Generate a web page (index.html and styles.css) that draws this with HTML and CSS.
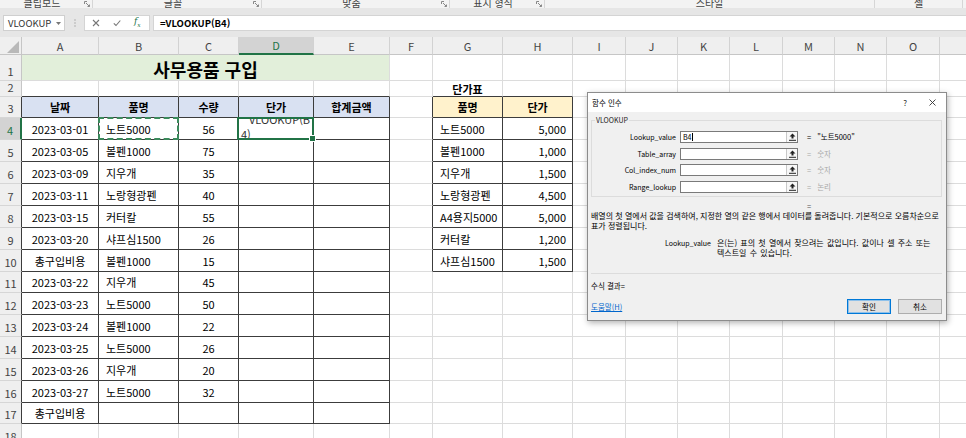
FILE: index.html
```html
<!DOCTYPE html>
<html lang="ko">
<head>
    <meta charset="UTF-8">
    <meta name="viewport" content="width=device-width, initial-scale=1.0">
    <title>사무용품 구입 - VLOOKUP</title>
    <link rel="stylesheet" href="styles.css">
</head>
<body>
    <!-- Ribbon group labels (only the bottom edge is visible) -->
    <div class="ribbon">
        <div class="group g1"><span>클립보드</span><svg class="launch" width="6" height="6"><path d="M.5 3V.5H3M2 2l3.5 3.5M3.5 5.5h2v-2" stroke="#888" fill="none"/></svg></div>
        <div class="group g2"><span>글꼴</span><svg class="launch" width="6" height="6"><path d="M.5 3V.5H3M2 2l3.5 3.5M3.5 5.5h2v-2" stroke="#888" fill="none"/></svg></div>
        <div class="group g3"><span>맞춤</span><svg class="launch" width="6" height="6"><path d="M.5 3V.5H3M2 2l3.5 3.5M3.5 5.5h2v-2" stroke="#888" fill="none"/></svg></div>
        <div class="group g4"><span>표시 형식</span><svg class="launch" width="6" height="6"><path d="M.5 3V.5H3M2 2l3.5 3.5M3.5 5.5h2v-2" stroke="#888" fill="none"/></svg></div>
        <div class="group g5"><span>스타일</span></div>
        <div class="group g6"><span>셀</span></div>
    </div>

    <!-- Name box + formula bar -->
    <div class="fbar">
        <div class="namebox">
            <span>VLOOKUP</span>
            <svg width="5" height="3"><polygon points="0,0 5,0 2.5,3" fill="#777"/></svg>
        </div>
        <div class="grip">
            <svg width="2" height="8"><circle cx="1" cy="1" r=".8" fill="#aaa"/><circle cx="1" cy="4" r=".8" fill="#aaa"/><circle cx="1" cy="7" r=".8" fill="#aaa"/></svg>
        </div>
        <div class="fbtns">
            <svg width="8" height="8"><path d="M1 1l6 6M7 1l-6 6" stroke="#777" stroke-width="1.1"/></svg>
            <svg width="8" height="8"><path d="M.8 4.3l2.2 2.2L7.3 1.5" stroke="#777" stroke-width="1.1" fill="none"/></svg>
            <span class="fx">f<sub>x</sub></span>
        </div>
        <div class="finput">=VLOOKUP(B4)</div>
    </div>

    <!-- Worksheet -->
    <div class="sheet">
        <div class="corner"><svg width="21" height="17"><polygon points="7,16 19,16 19,4" fill="#b9b9b9"/></svg></div>
        <div class="ch">A</div><div class="ch">B</div><div class="ch">C</div><div class="ch sel">D</div><div class="ch">E</div><div class="ch">F</div><div class="ch">G</div><div class="ch">H</div><div class="ch">I</div><div class="ch">J</div><div class="ch">K</div><div class="ch">L</div><div class="ch">M</div><div class="ch">N</div><div class="ch">O</div><div class="ch">P</div>

        <div class="rh">1</div>
        <div class="c title">사무용품 구입</div>
        <div class="c"></div><div class="c"></div><div class="c"></div><div class="c"></div><div class="c"></div><div class="c"></div><div class="c"></div><div class="c"></div><div class="c"></div><div class="c"></div><div class="c"></div>

        <div class="rh">2</div>
        <div class="c tb"></div><div class="c tb"></div><div class="c tb"></div><div class="c tb"></div><div class="c tb"></div>
        <div class="c"></div><div class="c tb bold ctr">단가표</div><div class="c tb"></div>
        <div class="c"></div><div class="c"></div><div class="c"></div><div class="c"></div><div class="c"></div><div class="c"></div><div class="c"></div><div class="c"></div>

        <div class="rh tl">3</div>
        <div class="c t hd">날짜</div><div class="c t hd">품명</div><div class="c t hd">수량</div><div class="c t hd">단가</div><div class="c t hd">합계금액</div>
        <div class="c tl"></div><div class="c t hd2">품명</div><div class="c t hd2">단가</div>
        <div class="c"></div><div class="c"></div><div class="c"></div><div class="c"></div><div class="c"></div><div class="c"></div><div class="c"></div><div class="c"></div>

        <div class="rh tl sel">4</div>
        <div class="c t ctr">2023-03-01</div><div class="c t lft ants">노트5000</div><div class="c t ctr">56</div>
        <div class="c t cur"><div class="edit"><p><span class="l1">VLOOKUP(B</span><br>4)</p></div></div><div class="c t"></div>
        <div class="c tl"></div><div class="c t lft">노트5000</div><div class="c t rgt">5,000</div>
        <div class="c"></div><div class="c"></div><div class="c"></div><div class="c"></div><div class="c"></div><div class="c"></div><div class="c"></div><div class="c"></div>

        <div class="rh tl">5</div>
        <div class="c t ctr">2023-03-05</div><div class="c t lft">볼펜1000</div><div class="c t ctr">75</div><div class="c t"></div><div class="c t"></div>
        <div class="c tl"></div><div class="c t lft">볼펜1000</div><div class="c t rgt">1,000</div>
        <div class="c"></div><div class="c"></div><div class="c"></div><div class="c"></div><div class="c"></div><div class="c"></div><div class="c"></div><div class="c"></div>

        <div class="rh tl">6</div>
        <div class="c t ctr">2023-03-09</div><div class="c t lft">지우개</div><div class="c t ctr">35</div><div class="c t"></div><div class="c t"></div>
        <div class="c tl"></div><div class="c t lft">지우개</div><div class="c t rgt">1,500</div>
        <div class="c"></div><div class="c"></div><div class="c"></div><div class="c"></div><div class="c"></div><div class="c"></div><div class="c"></div><div class="c"></div>

        <div class="rh tl">7</div>
        <div class="c t ctr">2023-03-11</div><div class="c t lft">노랑형광펜</div><div class="c t ctr">40</div><div class="c t"></div><div class="c t"></div>
        <div class="c tl"></div><div class="c t lft">노랑형광펜</div><div class="c t rgt">4,500</div>
        <div class="c"></div><div class="c"></div><div class="c"></div><div class="c"></div><div class="c"></div><div class="c"></div><div class="c"></div><div class="c"></div>

        <div class="rh tl">8</div>
        <div class="c t ctr">2023-03-15</div><div class="c t lft">커터칼</div><div class="c t ctr">55</div><div class="c t"></div><div class="c t"></div>
        <div class="c tl"></div><div class="c t lft">A4용지5000</div><div class="c t rgt">5,000</div>
        <div class="c"></div><div class="c"></div><div class="c"></div><div class="c"></div><div class="c"></div><div class="c"></div><div class="c"></div><div class="c"></div>

        <div class="rh tl">9</div>
        <div class="c t ctr">2023-03-20</div><div class="c t lft">샤프심1500</div><div class="c t ctr">26</div><div class="c t"></div><div class="c t"></div>
        <div class="c tl"></div><div class="c t lft">커터칼</div><div class="c t rgt">1,200</div>
        <div class="c"></div><div class="c"></div><div class="c"></div><div class="c"></div><div class="c"></div><div class="c"></div><div class="c"></div><div class="c"></div>

        <div class="rh tl">10</div>
        <div class="c t ctr">총구입비용</div><div class="c t lft">볼펜1000</div><div class="c t ctr">15</div><div class="c t"></div><div class="c t"></div>
        <div class="c tl"></div><div class="c t lft">샤프심1500</div><div class="c t rgt">1,500</div>
        <div class="c"></div><div class="c"></div><div class="c"></div><div class="c"></div><div class="c"></div><div class="c"></div><div class="c"></div><div class="c"></div>

        <div class="rh tl">11</div>
        <div class="c t ctr">2023-03-22</div><div class="c t lft">지우개</div><div class="c t ctr">45</div><div class="c t"></div><div class="c t"></div>
        <div class="c"></div><div class="c"></div><div class="c"></div>
        <div class="c"></div><div class="c"></div><div class="c"></div><div class="c"></div><div class="c"></div><div class="c"></div><div class="c"></div><div class="c"></div>

        <div class="rh tl">12</div>
        <div class="c t ctr">2023-03-23</div><div class="c t lft">노트5000</div><div class="c t ctr">50</div><div class="c t"></div><div class="c t"></div>
        <div class="c"></div><div class="c"></div><div class="c"></div>
        <div class="c"></div><div class="c"></div><div class="c"></div><div class="c"></div><div class="c"></div><div class="c"></div><div class="c"></div><div class="c"></div>

        <div class="rh tl">13</div>
        <div class="c t ctr">2023-03-24</div><div class="c t lft">볼펜1000</div><div class="c t ctr">22</div><div class="c t"></div><div class="c t"></div>
        <div class="c"></div><div class="c"></div><div class="c"></div>
        <div class="c"></div><div class="c"></div><div class="c"></div><div class="c"></div><div class="c"></div><div class="c"></div><div class="c"></div><div class="c"></div>

        <div class="rh tl">14</div>
        <div class="c t ctr">2023-03-25</div><div class="c t lft">노트5000</div><div class="c t ctr">26</div><div class="c t"></div><div class="c t"></div>
        <div class="c"></div><div class="c"></div><div class="c"></div>
        <div class="c"></div><div class="c"></div><div class="c"></div><div class="c"></div><div class="c"></div><div class="c"></div><div class="c"></div><div class="c"></div>

        <div class="rh tl">15</div>
        <div class="c t ctr">2023-03-26</div><div class="c t lft">지우개</div><div class="c t ctr">20</div><div class="c t"></div><div class="c t"></div>
        <div class="c"></div><div class="c"></div><div class="c"></div>
        <div class="c"></div><div class="c"></div><div class="c"></div><div class="c"></div><div class="c"></div><div class="c"></div><div class="c"></div><div class="c"></div>

        <div class="rh tl">16</div>
        <div class="c t ctr">2023-03-27</div><div class="c t lft">노트5000</div><div class="c t ctr">32</div><div class="c t"></div><div class="c t"></div>
        <div class="c"></div><div class="c"></div><div class="c"></div>
        <div class="c"></div><div class="c"></div><div class="c"></div><div class="c"></div><div class="c"></div><div class="c"></div><div class="c"></div><div class="c"></div>

        <div class="rh tl">17</div>
        <div class="c t ctr">총구입비용</div><div class="c t"></div><div class="c t"></div><div class="c t"></div><div class="c t"></div>
        <div class="c"></div><div class="c"></div><div class="c"></div>
        <div class="c"></div><div class="c"></div><div class="c"></div><div class="c"></div><div class="c"></div><div class="c"></div><div class="c"></div><div class="c"></div>

        <div class="rh">18</div>
        <div class="c"></div><div class="c"></div><div class="c"></div><div class="c"></div><div class="c"></div><div class="c"></div><div class="c"></div><div class="c"></div>
        <div class="c"></div><div class="c"></div><div class="c"></div><div class="c"></div><div class="c"></div><div class="c"></div><div class="c"></div><div class="c"></div>
    </div>

    <!-- Function Arguments dialog -->
    <div class="dialog">
        <div class="dlg-title">
            <span>함수 인수</span>
            <div class="dlg-ctrls">
                <span>?</span>
                <svg width="7" height="7"><path d="M.5 .5l6 6M6.5 .5l-6 6" stroke="#333" stroke-width=".9"/></svg>
            </div>
        </div>
        <div class="dlg-body">
            <fieldset class="args">
                <legend>VLOOKUP</legend>
                <div class="arg-row">
                    <label>Lookup_value</label>
                    <div class="field"><span class="val">B4<i class="caret"></i></span><span class="pick"><svg width="7" height="8"><path d="M3.5 .5L6.5 3.5H4.5V5.5H2.5V3.5H.5Z" fill="#222"/><path d="M0 7.3h7" stroke="#222"/></svg></span></div>
                    <div class="res"><span>=</span><span class="rv">"노트5000"</span></div>
                </div>
                <div class="arg-row">
                    <label>Table_array</label>
                    <div class="field"><span class="val"></span><span class="pick"><svg width="7" height="8"><path d="M3.5 .5L6.5 3.5H4.5V5.5H2.5V3.5H.5Z" fill="#222"/><path d="M0 7.3h7" stroke="#222"/></svg></span></div>
                    <div class="res dim"><span>=</span><span class="rv">숫자</span></div>
                </div>
                <div class="arg-row">
                    <label>Col_index_num</label>
                    <div class="field"><span class="val"></span><span class="pick"><svg width="7" height="8"><path d="M3.5 .5L6.5 3.5H4.5V5.5H2.5V3.5H.5Z" fill="#222"/><path d="M0 7.3h7" stroke="#222"/></svg></span></div>
                    <div class="res dim"><span>=</span><span class="rv">숫자</span></div>
                </div>
                <div class="arg-row">
                    <label>Range_lookup</label>
                    <div class="field"><span class="val"></span><span class="pick"><svg width="7" height="8"><path d="M3.5 .5L6.5 3.5H4.5V5.5H2.5V3.5H.5Z" fill="#222"/><path d="M0 7.3h7" stroke="#222"/></svg></span></div>
                    <div class="res dim"><span>=</span><span class="rv">논리</span></div>
                </div>
            </fieldset>

            <div class="eq">=</div>
            <p class="desc">배열의 첫 열에서 값을 검색하여, 지정한 열의 같은 행에서 데이터를 돌려줍니다. 기본적으로 오름차순으로<br>표가 정렬됩니다.</p>

            <div class="arg-help">
                <span class="arg-name">Lookup_value</span>
                <p>은(는) 표의 첫 열에서 찾으려는 값입니다. 값이나 셀 주소 또는<br>텍스트일 수 있습니다.</p>
            </div>

            <div class="result">수식 결과=</div>

            <div class="dlg-foot">
                <a href="#">도움말(H)</a>
                <div class="btns">
                    <button class="btn default">확인</button>
                    <button class="btn">취소</button>
                </div>
            </div>
        </div>
    </div>
</body>
</html>
```

FILE: styles.css
```css
/* Reset */
* {
    margin: 0;
    padding: 0;
    box-sizing: border-box;
}

body {
    width: 966px;
    height: 438px;
    overflow: hidden;
    position: relative;
    background: #fff;
    color: #000;
    font-family: "Noto Sans CJK KR", "Noto Sans", sans-serif;
}

/* Ribbon group labels */
.ribbon {
    display: flex;
    height: 8px;
    overflow: hidden;
    background: #f3f3f3;
}

.group {
    display: grid;
    grid-template-columns: 1fr auto;
    border-right: 1px solid #d6d6d6;
    font-size: 10px;
    line-height: 10px;
    color: #444;
}

.group span {
    text-align: center;
    margin-top: -2px;
}

.launch {
    margin: 1px 2px 0 0;
}

.g1 { width: 93px; }
.g2 { width: 169px; }
.g3 { width: 188px; }
.g4 { width: 95px; }
.g5 { width: 330px; }
.g6 { width: 88px; }

/* Formula bar */
.fbar {
    display: flex;
    align-items: center;
    height: 29px;
    padding: 7px 0 6px 3px;
    background: #e6e6e6;
}

.namebox {
    width: 62px;
    height: 16px;
    display: flex;
    align-items: center;
    justify-content: space-between;
    padding: 0 3px 0 4px;
    background: #fff;
    border: 1px solid #cfcfcf;
    font-size: 9.5px;
    color: #333;
}

.grip {
    width: 19px;
    display: flex;
    justify-content: center;
}

.fbtns {
    width: 66px;
    height: 16px;
    display: flex;
    align-items: center;
    gap: 13px;
    padding-left: 7px;
    background: #fff;
    border: 1px solid #d4d4d4;
}

.fx {
    font-family: "DejaVu Serif", serif;
    font-style: italic;
    font-size: 9px;
    color: #217346;
    line-height: 9px;
}

.fx sub {
    font-size: 6px;
}

.finput {
    flex: 1;
    height: 16px;
    margin-left: 3px;
    display: flex;
    align-items: center;
    padding-left: 6px;
    background: #fff;
    border: 1px solid #d4d4d4;
    border-right: none;
    font-size: 9.5px;
    font-weight: bold;
}

/* Worksheet grid */
.sheet {
    display: grid;
    grid-template-columns: 22px 77px 80px 60px 75px 76px 43px 70px 70px 53px 52px 52px 53px 52px 52px 53px 60px;
    grid-template-rows: 18px 26px 16px 21px repeat(7, 22px) 21px 22px 22px 22px 22px 22px 21px 22px;
    font-size: 11px;
}

.corner {
    background: #efefef;
    border-right: 1px solid #c6c6c6;
    border-bottom: 1px solid #c6c6c6;
}

.ch {
    display: flex;
    align-items: center;
    justify-content: center;
    background: #efefef;
    border-right: 1px solid #d2d2d2;
    border-bottom: 1px solid #c6c6c6;
    color: #444;
}

.rh {
    display: flex;
    align-items: flex-end;
    justify-content: center;
    padding-bottom: 2px;
    line-height: 14px;
    background: #efefef;
    border-right: 1px solid #c6c6c6;
    border-bottom: 1px solid #d6d6d6;
    color: #444;
}

.c {
    display: flex;
    align-items: center;
    white-space: nowrap;
    overflow: hidden;
    border-right: 1px solid #dcdcdc;
    border-bottom: 1px solid #dcdcdc;
}

/* Table borders */
.t {
    border-right-color: #3c3c3c;
    border-bottom-color: #3c3c3c;
}
.tl { border-right-color: #3c3c3c; }
.tb { border-bottom-color: #3c3c3c; }

.ctr { justify-content: center; }
.lft { padding-left: 7px; }
.rgt { justify-content: flex-end; padding-right: 6px; }
.bold { font-weight: bold; }

.title {
    grid-column: span 5;
    justify-content: center;
    padding-top: 2px;
    background: #e2efda;
    font-size: 18px;
    font-weight: bold;
}

.hd {
    justify-content: center;
    background: #d9e1f2;
    font-weight: bold;
}

.hd2 {
    justify-content: center;
    background: #fff2cc;
    font-weight: bold;
}

/* Selection */
.ch.sel {
    background: #d3d3d3;
    color: #217346;
    border-bottom: 2px solid #217346;
}

.rh.sel {
    background: #d3d3d3;
    color: #217346;
    border-right: 2px solid #217346;
}

.ants {
    position: relative;
    overflow: visible;
}

.ants::after {
    content: "";
    position: absolute;
    left: -1px;
    top: -1px;
    right: -1px;
    bottom: -1px;
    border: 2px dashed #3b8a5c;
}

.cur {
    position: relative;
    overflow: visible;
}

.cur::after {
    content: "";
    position: absolute;
    left: -2px;
    top: -1px;
    right: -1px;
    bottom: -1px;
    border: 2px solid #217346;
}

.cur::before {
    content: "";
    position: absolute;
    right: -3px;
    bottom: -3px;
    width: 5px;
    height: 5px;
    background: #217346;
    border: 1px solid #fff;
    z-index: 1;
}

.edit {
    align-self: stretch;
    width: 100%;
    overflow: hidden;
}

.edit p {
    margin-top: -6px;
    padding-left: 2px;
    line-height: 15px;
    color: #333;
}

.edit .l1 {
    padding-left: 8px;
}

/* Dialog */
.dialog {
    position: absolute;
    left: 587px;
    top: 92px;
    width: 360px;
    height: 229px;
    background: #f0f0f0;
    border: 1px solid #8c8c8c;
    box-shadow: 1px 2px 6px rgba(0, 0, 0, 0.3);
    font-size: 7.5px;
}

.dlg-title {
    height: 19px;
    display: flex;
    align-items: center;
    padding-left: 4px;
    background: #fff;
}

.dlg-ctrls {
    margin-left: auto;
    display: flex;
    align-items: center;
    gap: 22px;
    padding-right: 10px;
    font-size: 8px;
    color: #333;
}

.dlg-body {
    padding: 4px 4px 0 3px;
}

.args {
    border: 1px solid #dcdcdc;
    padding: 6px 0 3px 0;
    min-width: 0;
}

.args legend {
    margin-left: 3px;
    padding: 0 1px;
    font-size: 7px;
    line-height: 9px;
    color: #222;
}

.arg-row {
    display: grid;
    grid-template-columns: 84px 118px 1fr;
    column-gap: 4px;
    height: 12px;
    line-height: 12px;
}

.arg-row + .arg-row {
    margin-top: 4.7px;
}

.arg-row label {
    text-align: right;
    font-size: 7px;
}

.field {
    display: flex;
    background: #fff;
    border: 1px solid #7a7a7a;
}

.val {
    flex: 1;
    padding-left: 2px;
    line-height: 10px;
    font-size: 7px;
    display: flex;
    align-items: center;
}

.caret {
    width: 1px;
    height: 8px;
    margin-left: 1px;
    background: #000;
}

.pick {
    width: 11px;
    display: flex;
    align-items: center;
    justify-content: center;
    border-left: 1px solid #c8c8c8;
    background: #f7f7f7;
}

.res {
    padding-left: 5px;
}

.res .rv {
    margin-left: 6px;
}

.res.dim {
    color: #a8a8a8;
}

.eq {
    margin-top: 5px;
    padding-left: 216px;
    line-height: 8px;
    color: #555;
}

.desc {
    margin-top: 1px;
    line-height: 10px;
    font-size: 8px;
    white-space: nowrap;
}

.arg-help {
    display: flex;
    gap: 6px;
    margin-top: 7px;
    line-height: 10px;
    white-space: nowrap;
}

.arg-name {
    width: 120px;
    text-align: right;
    font-size: 7px;
}

.arg-help p {
    font-size: 8px;
    word-spacing: 1px;
}

.result {
    margin-top: 15px;
    padding-top: 7px;
    border-top: 1px solid #dcdcdc;
    line-height: 10px;
}

.dlg-foot {
    display: flex;
    align-items: center;
    justify-content: space-between;
    margin-top: 8px;
}

.dlg-foot a {
    color: #0066cc;
}

.btns {
    display: flex;
    gap: 7px;
}

.btn {
    width: 44px;
    height: 15px;
    background: #e1e1e1;
    border: 1px solid #adadad;
    font-family: inherit;
    font-size: 7.5px;
    color: #000;
}

.btn.default {
    border-color: #0078d7;
    box-shadow: inset 0 0 0 1px #8fc1ea;
}
```
